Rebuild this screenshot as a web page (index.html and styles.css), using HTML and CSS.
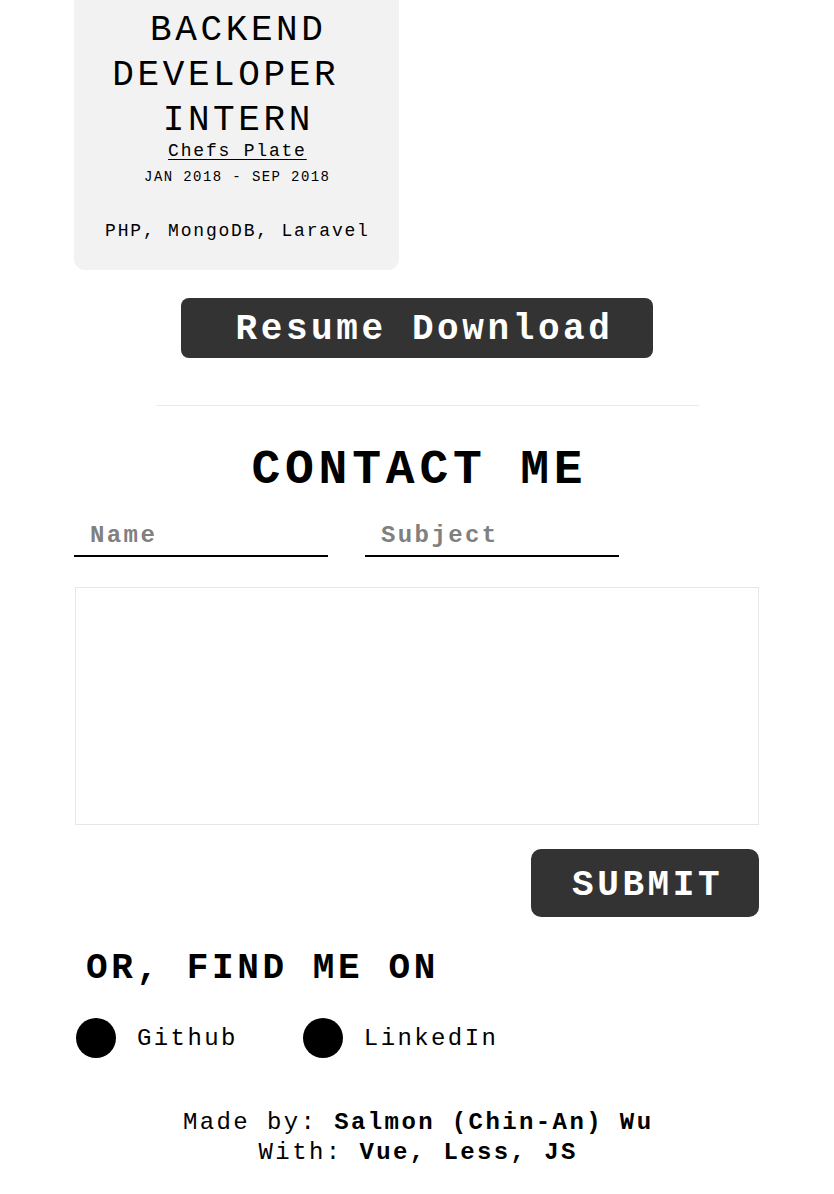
FILE: index.html
```html
<!DOCTYPE html>
<html lang="en">
<head>
<meta charset="utf-8">
<title>Contact</title>
<link rel="stylesheet" href="styles.css">
</head>
<body>
<main class="page">
  <section class="experience">
    <article class="job-card">
      <h3 class="job-title">BACKEND DEVELOPER&nbsp; INTERN</h3>
      <a class="job-company" href="#">Chefs Plate</a>
      <p class="job-dates">JAN 2018 - SEP 2018</p>
      <p class="job-stack">PHP, MongoDB, Laravel</p>
    </article>
  </section>

  <div class="resume-row">
    <a class="resume-btn" href="#">Resume Download</a>
  </div>

  <hr class="divider">

  <section class="contact">
    <h2 class="contact-title">CONTACT ME</h2>
    <form class="contact-form">
      <div class="field-row">
        <input class="field" type="text" placeholder="Name">
        <input class="field" type="text" placeholder="Subject">
      </div>
      <textarea class="message"></textarea>
      <div class="submit-row">
        <button class="submit-btn" type="button">SUBMIT</button>
      </div>
    </form>

    <h2 class="find-title">OR, FIND ME ON</h2>
    <ul class="socials">
      <li class="social"><span class="social-icon"></span><span class="social-name">Github</span></li>
      <li class="social"><span class="social-icon"></span><span class="social-name">LinkedIn</span></li>
    </ul>
  </section>

  <footer class="footer">
    <p class="footer-line">Made by: <strong>Salmon (Chin-An) Wu</strong></p>
    <p class="footer-line">With: <strong>Vue, Less, JS</strong></p>
  </footer>
</main>
</body>
</html>
```

FILE: styles.css
```css
* {
  box-sizing: border-box;
  letter-spacing: 0.1em;
}

html, body {
  margin: 0;
  padding: 0;
  background: #ffffff;
}

body {
  font-family: "Liberation Mono", "DejaVu Sans Mono", monospace;
  color: #000000;
  overflow: hidden;
}

.page {
  padding: 0 74px;
}

.experience {
  display: flex;
}

.job-card {
  width: 325px;
  margin-top: -20px;
  padding: 28px 10px 27px;
  background: #f2f2f2;
  border-radius: 11px;
  text-align: center;
  display: flex;
  flex-direction: column;
  align-items: center;
}

.job-title {
  margin: 0;
  font-size: 36px;
  line-height: 45px;
  font-weight: 400;
  padding-left: 0.1em;
}

.job-company {
  display: block;
  font-size: 18px;
  line-height: 17px;
  color: #000;
  text-decoration: underline;
  text-underline-offset: 3px;
  padding-left: 0.1em;
}

.job-dates {
  margin: 8px 0 0;
  font-size: 14px;
  line-height: 18px;
  padding-left: 0.1em;
}

.job-stack {
  margin: 34px 0 0;
  font-size: 18px;
  line-height: 23px;
  padding-left: 0.1em;
}

.resume-row {
  display: flex;
  justify-content: center;
  margin-top: 28px;
}

.resume-btn {
  display: block;
  height: 60px;
  padding: 4px 39px 0 54px;
  background: #333333;
  border-radius: 8px;
  color: #ffffff;
  font-size: 36px;
  font-weight: 700;
  line-height: 56px;
  text-decoration: none;
}

.divider {
  width: 543px;
  margin: 47px 0 0 82px;
  border: 0;
  border-top: 1px solid #ebebeb;
  height: 0;
}

.contact-title {
  margin: 34px 0 0;
  text-align: center;
  font-size: 48px;
  line-height: 60px;
  font-weight: 700;
  padding-left: 0.1em;
}

.contact-form {
  margin-top: 18px;
  display: flex;
  flex-direction: column;
}

.field-row {
  display: flex;
  gap: 37px;
}

.field {
  width: 254px;
  height: 39px;
  padding: 0 0 2px 16px;
  border: 0;
  border-bottom: 2px solid #000;
  background: transparent;
  font-family: inherit;
  font-size: 24px;
  font-weight: 700;
  color: #000;
  outline: none;
}

.field::placeholder {
  color: #808080;
  opacity: 1;
}

.message {
  display: block;
  margin: 30px 0 0 1px;
  width: calc(100% - 2px);
  height: 238px;
  border: 1px solid #e6e6e6;
  resize: none;
  font-family: inherit;
  outline: none;
}

.submit-row {
  display: flex;
  justify-content: flex-end;
  margin-top: 24px;
  padding-right: 1px;
}

.submit-btn {
  width: 228px;
  height: 68px;
  padding: 6px 0 0 41px;
  text-align: left;
  border: 0;
  border-radius: 10px;
  background: #333333;
  color: #ffffff;
  font-family: inherit;
  font-size: 36px;
  font-weight: 700;
  line-height: 62px;
  cursor: pointer;
}

.find-title {
  margin: 29px 0 0;
  padding-left: 12px;
  font-size: 36px;
  line-height: 45px;
  font-weight: 700;
}

.socials {
  list-style: none;
  margin: 27px 0 0;
  padding: 0 0 0 2px;
  display: flex;
  gap: 65px;
}

.social {
  display: flex;
  align-items: center;
  gap: 21px;
}

.social-icon {
  width: 40px;
  height: 40px;
  border-radius: 50%;
  background: #000;
}

.social-name {
  font-size: 24px;
  line-height: 30px;
  padding-top: 2px;
}

.footer {
  margin-top: 50px;
  text-align: center;
}

.footer-line {
  margin: 0;
  font-size: 24px;
  line-height: 30px;
  padding-left: 0.1em;
}

.footer-line strong {
  font-weight: 700;
}
```
